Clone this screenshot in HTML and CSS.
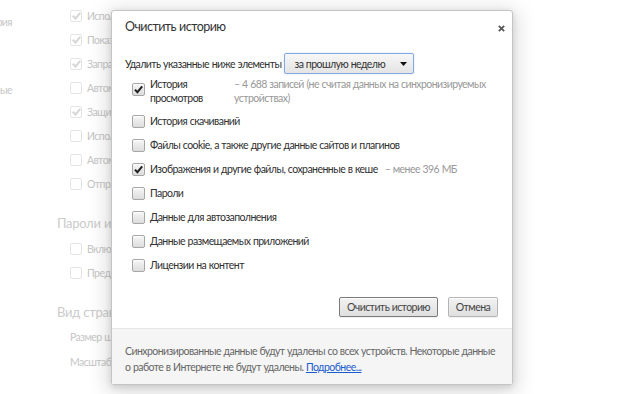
FILE: index.html
```html
<!DOCTYPE html>
<html lang="ru">
<head>
  <meta charset="UTF-8" />
  <title>Настройки</title>
  <link rel="stylesheet" href="styles.css">
</head>
<body>
  <div class="settings">
    <div class="side">
      <span class="side-item">История</span>
      <span class="side-item second">Личные данные</span>
    </div>
    <div class="main">
      <div class="rows">
        <div class="bg-row"><span class="bg-box on"></span>Использовать веб-службу</div>
        <div class="bg-row"><span class="bg-box on"></span>Показывать подсказки</div>
        <div class="bg-row"><span class="bg-box on"></span>Запрашивать страницы</div>
        <div class="bg-row"><span class="bg-box"></span>Автоматически отправлять</div>
        <div class="bg-row"><span class="bg-box on"></span>Защитить устройство</div>
        <div class="bg-row"><span class="bg-box"></span>Использовать веб-службу</div>
        <div class="bg-row"><span class="bg-box"></span>Автоматически отправлять</div>
        <div class="bg-row"><span class="bg-box"></span>Отправлять запрос</div>
      </div>
      <h3 class="bg-title">Пароли и формы</h3>
      <div class="rows">
        <div class="bg-row"><span class="bg-box"></span>Включить автозаполнение</div>
        <div class="bg-row"><span class="bg-box"></span>Предлагать сохранять пароли</div>
      </div>
      <h3 class="bg-title tight">Вид страниц</h3>
      <div class="rows">
        <div class="bg-row plain">Размер шрифта</div>
        <div class="bg-row plain">Масштаб страницы</div>
      </div>
      <h3 class="bg-title">Сеть</h3>
    </div>
  </div>

  <div class="overlay">
    <div class="dialog">
      <div class="dialog-head">
        <h1>Очистить историю</h1>
        <button class="close" type="button">
          <svg width="7" height="7" viewBox="0 0 7 7"><path d="M0.8 0.8L6.2 6.2M6.2 0.8L0.8 6.2" stroke="#555" stroke-width="1.7"/></svg>
        </button>
      </div>
      <div class="dialog-body">
        <div class="period">
          <span>Удалить указанные ниже элементы</span>
          <div class="select">
            <span>за прошлую неделю</span>
            <svg width="7" height="4" viewBox="0 0 7 4"><path d="M0 0H7L3.5 4Z" fill="#111"/></svg>
          </div>
        </div>
        <div class="items">
          <div class="item first">
            <span class="box"><svg width="11" height="11" viewBox="0 0 11 11"><path d="M2 5.6L4.4 8.2L9.2 2.4" fill="none" stroke="#222" stroke-width="2"/></svg></span>
            <span class="label narrow">История просмотров</span>
            <span class="info">– 4 688 записей (не считая данных на синхронизируемых устройствах)</span>
          </div>
          <div class="item">
            <span class="box"></span>
            <span class="label">История скачиваний</span>
          </div>
          <div class="item">
            <span class="box"></span>
            <span class="label">Файлы cookie, а также другие данные сайтов и плагинов</span>
          </div>
          <div class="item">
            <span class="box"><svg width="11" height="11" viewBox="0 0 11 11"><path d="M2 5.6L4.4 8.2L9.2 2.4" fill="none" stroke="#222" stroke-width="2"/></svg></span>
            <span class="label">Изображения и другие файлы, сохраненные в кеше</span>
            <span class="info inline">– менее 396 МБ</span>
          </div>
          <div class="item">
            <span class="box"></span>
            <span class="label">Пароли</span>
          </div>
          <div class="item">
            <span class="box"></span>
            <span class="label">Данные для автозаполнения</span>
          </div>
          <div class="item">
            <span class="box"></span>
            <span class="label">Данные размещаемых приложений</span>
          </div>
          <div class="item">
            <span class="box"></span>
            <span class="label">Лицензии на контент</span>
          </div>
        </div>
        <div class="actions">
          <button class="btn default" type="button">Очистить историю</button>
          <button class="btn cancel" type="button">Отмена</button>
        </div>
      </div>
      <div class="dialog-foot">
        Синхронизированные данные будут удалены со всех устройств. Некоторые данные о работе в Интернете не будут удалены. <a href="#">Подробнее...</a>
      </div>
    </div>
  </div>
</body>
</html>
```

FILE: styles.css
```css
:root {
  --text: #303030;
  --muted: #989898;
  --faded: #c6c6c6;
  --faded-box: #e4e4e4;
  --border: #c4c4c4;
}

html, body {
  margin: 0;
  padding: 0;
  width: 620px;
  height: 394px;
  overflow: hidden;
  background: #fff;
  font-family: "Lato", "Open Sans", sans-serif;
  font-size: 10.5px;
  letter-spacing: -0.55px;
  word-spacing: 0.4px;
  color: var(--text);
}

/* faded settings page behind the dialog */

.settings {
  display: flex;
  color: var(--faded);
}

.side {
  width: 12px;
  display: flex;
  flex-direction: column;
  align-items: flex-end;
  padding-top: 14px;
}

.side-item {
  white-space: nowrap;
  line-height: 16px;
}

.side-item.second {
  margin-top: 52px;
}

.main {
  margin-left: 45px;
  padding-top: 8px;
}

.rows {
  display: flex;
  flex-direction: column;
  gap: 8px;
  padding-left: 13px;
}

.bg-row {
  display: flex;
  align-items: center;
  gap: 5px;
  height: 16px;
  white-space: nowrap;
}

.bg-row.plain {
  height: 17px;
}

.bg-box {
  width: 10px;
  height: 10px;
  border: 1px solid var(--faded-box);
  border-radius: 2px;
  position: relative;
}

.bg-box.on::after {
  content: "";
  position: absolute;
  left: 3px;
  top: 0;
  width: 3px;
  height: 6px;
  border: solid #d6d6d6;
  border-width: 0 2px 2px 0;
  transform: rotate(40deg);
}

.bg-title {
  margin: 22px 0 9px;
  font-size: 13px;
  font-weight: normal;
  line-height: 18px;
  letter-spacing: -0.3px;
  color: #cbcbcb;
}

.bg-title.tight {
  margin-bottom: 7px;
}

/* dialog */

.overlay {
  position: absolute;
  left: 111px;
  top: 10px;
}

.dialog {
  box-sizing: border-box;
  width: 402px;
  height: 375px;
  display: flex;
  flex-direction: column;
  background: #fff;
  border: 1px solid var(--border);
  border-radius: 3px;
  box-shadow: 0 4px 20px 5px rgba(0, 0, 0, 0.13), 0 2px 6px rgba(0, 0, 0, 0.12);
}

.dialog-head {
  display: flex;
  justify-content: space-between;
  align-items: flex-start;
  padding: 7px 7px 0 13px;
}

.dialog-head h1 {
  margin: 0;
  font-size: 12.5px;
  font-weight: normal;
  line-height: 18px;
  letter-spacing: -0.55px;
  color: #333;
}

.close {
  border: none;
  background: none;
  padding: 0;
  margin-top: 7px;
  width: 7px;
  height: 7px;
  display: flex;
}

.dialog-body {
  flex: 1;
  padding: 17px 14px 0 13px;
}

.period {
  display: flex;
  align-items: center;
  gap: 3px;
}

.select {
  box-sizing: border-box;
  width: 130px;
  height: 21px;
  display: flex;
  align-items: center;
  justify-content: space-between;
  padding: 0 6px 0 9px;
  border: 1px solid #84a9e2;
  border-radius: 2px;
  background: linear-gradient(#f7f7f7, #e4e4e4);
  box-shadow: 0 0 2px rgba(100, 150, 230, 0.35);
  color: #333;
}

.items {
  display: flex;
  flex-direction: column;
  gap: 8px;
  padding: 3px 0 0 7px;
}

.item {
  display: flex;
  align-items: center;
  line-height: 16px;
}

.item.first {
  line-height: 14px;
  align-items: flex-start;
}

.box {
  width: 11px;
  height: 11px;
  flex: none;
  display: flex;
  align-items: center;
  justify-content: center;
  margin-right: 5px;
  border: 1px solid #a6a6a6;
  border-radius: 2px;
  background: linear-gradient(#f6f6f6, #dcdcdc);
  box-shadow: inset 0 1px 1px #fff;
}

.item.first .box {
  margin-top: 6px;
}

.label.narrow {
  width: 78px;
  flex: none;
}

.info {
  color: var(--muted);
  padding-left: 6px;
}

.info.inline {
  padding-left: 7px;
}

.actions {
  display: flex;
  justify-content: flex-end;
  gap: 10px;
  margin-top: 24px;
}

.btn {
  height: 20px;
  padding: 0;
  font-family: inherit;
  font-size: 10.5px;
  letter-spacing: inherit;
  word-spacing: inherit;
  color: #444;
  border: 1px solid #b4b4b4;
  border-radius: 2px;
  background: linear-gradient(#f2f2f2, #dfdfdf);
  box-shadow: inset 0 1px 1px #fff, 0 1px 0 rgba(0, 0, 0, 0.05);
}

.btn.default {
  width: 99px;
  border-color: #7a7a7a;
}

.btn.cancel {
  width: 50px;
}

.dialog-foot {
  box-sizing: border-box;
  height: 56px;
  padding: 14px 10px 0 13px;
  border-top: 1px solid #e6e6e6;
  background: #f5f5f5;
  line-height: 16px;
  color: #666;
}

.dialog-foot a {
  color: #1a5ccf;
}
```
